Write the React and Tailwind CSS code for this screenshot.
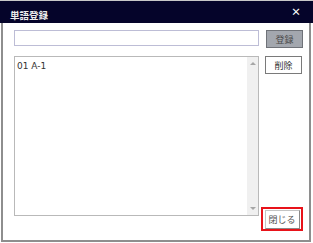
export default function App() {
  const jp = { fontFamily: '"Noto Sans CJK JP", "Noto Sans", sans-serif' };
  return (
    <div className="w-[313px] h-[243px] bg-white" style={jp}>
      <div className="w-[313px] h-[23px] bg-[#05042a] flex items-start justify-between border-t border-[#c8c8c8]">
        <span className="text-[#ececec] text-[9.5px] font-bold leading-none ml-[10px] mt-[10px]">単語登録</span>
        <span className="text-white text-[10px] font-bold leading-none mr-[12px] mt-[6px]">×</span>
      </div>
      <div className="ml-px w-[310px] h-[219px] border-l-2 border-r-2 border-b-2 border-[#8e8e8e]">
        <div className="flex pl-[11px] pt-[7px]">
          <div className="w-[245px] h-[16px] border border-[#bdbdd6] bg-white" />
          <div className="ml-[7px] w-[37px] h-[18px] bg-[#a3a7ae] border border-[#6f7278] flex items-center justify-center text-[9px] leading-none text-[#4a4a4a]">
            登録
          </div>
        </div>
        <div className="flex pl-[11px] mt-[8px]">
          <div className="w-[245px] h-[160px] border border-[#b9b9b9] bg-white flex">
            <div className="flex-1 pl-[2px] pt-[5px] text-[9px] leading-none text-[#333]" style={{ fontFamily: '"DejaVu Sans", "Noto Sans CJK JP", sans-serif' }}>
              01 A-1
            </div>
            <div className="w-[11px] h-full bg-[#f0f0f0] flex flex-col items-center justify-between py-[5px]">
              <div className="w-0 h-0 border-l-[3px] border-r-[3px] border-b-[3px] border-l-transparent border-r-transparent border-b-[#a6a6a6]" />
              <div className="w-0 h-0 border-l-[3px] border-r-[3px] border-t-[3px] border-l-transparent border-r-transparent border-t-[#a6a6a6]" />
            </div>
          </div>
          <div className="ml-[2px] w-[44px] flex flex-col items-start">
            <div className="ml-[4px] w-[37px] h-[18px] bg-white border border-[#7a7a7a] flex items-center justify-center text-[9px] leading-none text-[#333]">
              削除
            </div>
            <div className="mt-[133px] w-[42px] h-[24px] border-2 border-[#e8131a] flex items-center justify-center">
              <div className="w-[35px] h-[19px] bg-white border border-[#c4c4c4] border-r-[#8a8a8a] border-b-[#8a8a8a] flex items-center justify-center text-[9px] leading-none text-[#555]">
                閉じる
              </div>
            </div>
          </div>
        </div>
      </div>
    </div>
  );
}
